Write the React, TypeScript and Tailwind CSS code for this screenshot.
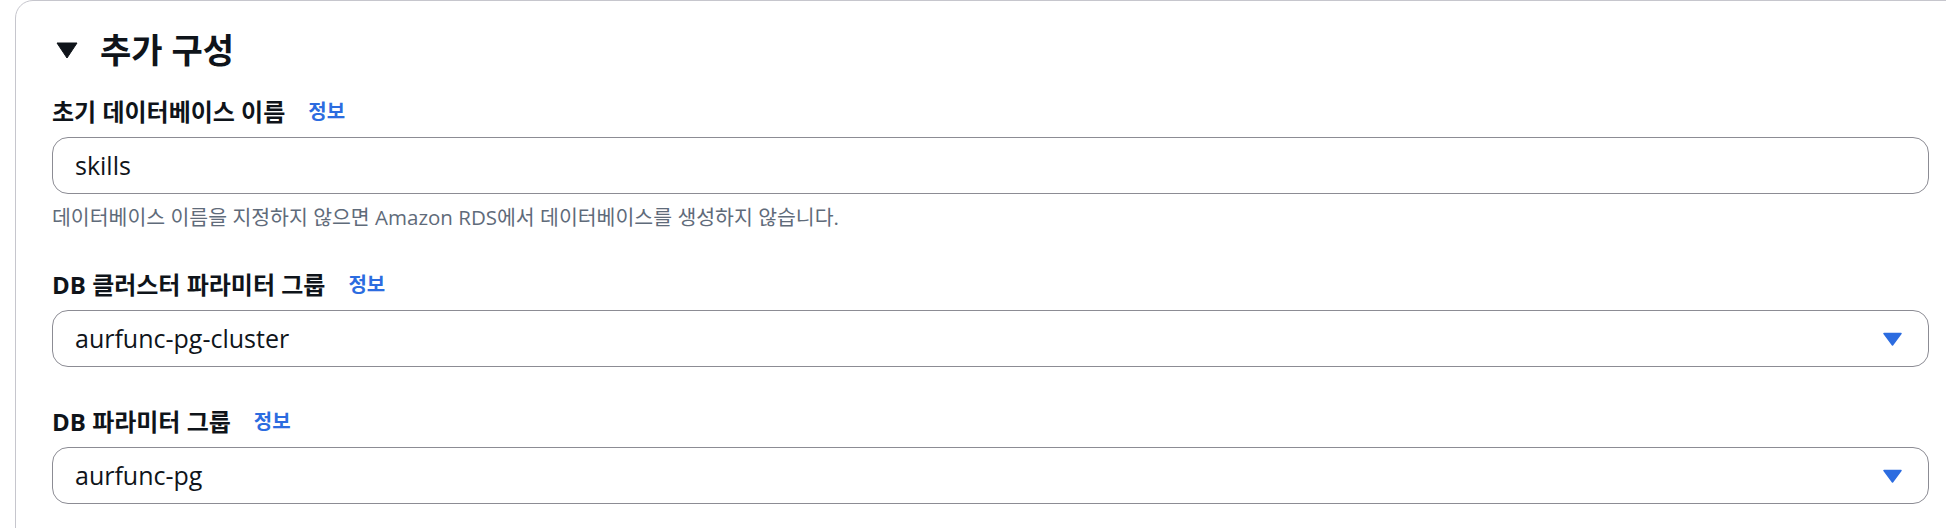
import React from "react";

const FONT = { fontFamily: '"Open Sans", "Noto Sans CJK KR", sans-serif' };

function Caret() {
  return (
    <svg width="19" height="14" viewBox="0 0 19 14" className="shrink-0">
      <path d="M1 1.5 L18 1.5 L9.5 13 Z" fill="#2c6ce0" stroke="#2c6ce0" strokeWidth="1.5" strokeLinejoin="round" />
    </svg>
  );
}

function Label({ text }: { text: string }) {
  return (
    <div className="flex items-center gap-[23px] h-[28px]">
      <span className="text-[24px] leading-[28px] font-bold text-[#0f141a]">{text}</span>
      <span className="text-[20px] leading-[28px] font-bold text-[#2c6ce0]">정보</span>
    </div>
  );
}

function SelectBox({ value }: { value: string }) {
  return (
    <div className="mt-[11px] h-[57px] border border-[#8c8c94] rounded-[16px] pl-[22px] pr-[26px] flex items-center justify-between">
      <span className="text-[25px] text-[#0f141a]">{value}</span>
      <Caret />
    </div>
  );
}

export default function App() {
  return (
    <div className="w-[1946px] h-[528px] overflow-hidden bg-white" style={FONT}>
      <div className="ml-[15px] w-[1951px] border border-[#c6c6cd] rounded-t-[18px] pt-[29px] px-[36px] pb-[60px]">
        <div className="flex items-center h-[40px]">
          <svg width="22" height="17" viewBox="0 0 22 17" className="ml-[4px] shrink-0">
            <path d="M1 1 L21 1 L11 16 Z" fill="#0f141a" stroke="#0f141a" strokeWidth="1" strokeLinejoin="round" />
          </svg>
          <span className="ml-[22px] text-[34px] leading-[40px] font-bold text-[#0f141a]">추가 구성</span>
        </div>

        <div className="mt-[28px]">
          <Label text="초기 데이터베이스 이름" />
          <div className="mt-[11px] h-[57px] border border-[#8c8c94] rounded-[16px] pl-[22px] flex items-center">
            <span className="text-[25px] text-[#0f141a]">skills</span>
          </div>
          <div className="mt-[10px] text-[20.5px] leading-[26px] text-[#5f6b7a]">
            데이터베이스 이름을 지정하지 않으면 Amazon RDS에서 데이터베이스를 생성하지 않습니다.
          </div>
        </div>

        <div className="mt-[41px]">
          <Label text="DB 클러스터 파라미터 그룹" />
          <SelectBox value="aurfunc-pg-cluster" />
        </div>

        <div className="mt-[41px]">
          <Label text="DB 파라미터 그룹" />
          <SelectBox value="aurfunc-pg" />
        </div>
      </div>
    </div>
  );
}
